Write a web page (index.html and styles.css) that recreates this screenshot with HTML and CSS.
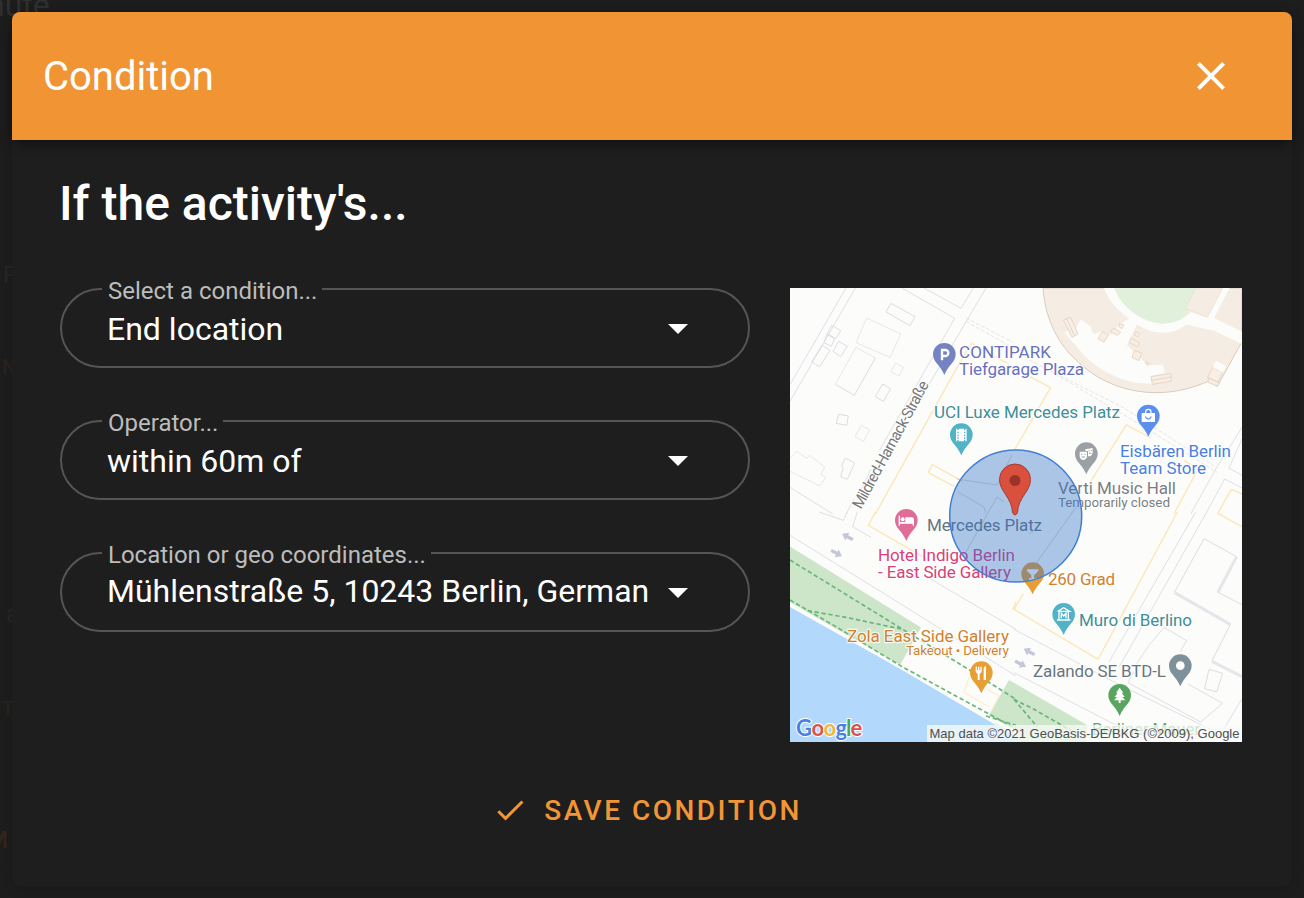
FILE: index.html
```html
<!DOCTYPE html>
<html lang="en">
<head>
<meta charset="utf-8">
<title>Condition</title>
<link rel="stylesheet" href="styles.css">
</head>
<body>
<div class="backdrop" aria-hidden="true">
  <span class="ghost ghost-title">nute</span>
  <span class="ghost ghost-p">P</span>
  <span class="ghost ghost-n">N</span>
  <span class="ghost ghost-a">a</span>
  <span class="ghost ghost-t">T</span>
  <span class="ghost ghost-m">M</span>
</div>
<main class="dialog">
  <header class="toolbar">
    <h1 class="toolbar-title">Condition</h1>
    <button class="close" aria-label="Close">
      <svg width="48" height="48" viewBox="0 0 24 24"><path fill="#fff" d="M19,6.41L17.59,5L12,10.59L6.41,5L5,6.41L10.59,12L5,17.59L6.41,19L12,13.41L17.59,19L19,17.59L13.41,12L19,6.41Z"/></svg>
    </button>
  </header>
  <section class="content">
    <h2 class="heading">If the activity's...</h2>
    <div class="columns">
      <div class="fields">
        <div class="field">
          <span class="label">Select a condition...</span>
          <span class="value">End location</span>
          <svg class="caret" width="48" height="48" viewBox="0 0 24 24"><path fill="#fff" d="M7,10L12,15L17,10H7Z"/></svg>
        </div>
        <div class="field">
          <span class="label">Operator...</span>
          <span class="value">within 60m of</span>
          <svg class="caret" width="48" height="48" viewBox="0 0 24 24"><path fill="#fff" d="M7,10L12,15L17,10H7Z"/></svg>
        </div>
        <div class="field">
          <span class="label">Location or geo coordinates...</span>
          <span class="value value-input">Mühlenstraße 5, 10243 Berlin, Germany</span>
          <svg class="caret" width="48" height="48" viewBox="0 0 24 24"><path fill="#fff" d="M7,10L12,15L17,10H7Z"/></svg>
        </div>
      </div>
      <svg class="map" width="452" height="454" viewBox="790 288 452 454">
        <defs>
          <path id="pin" d="M-34 0A34 34 0 1 1 34 0C34 24 12 32 0 62C-12 32 -34 24 -34 0Z"/>
          <path id="arrow" d="M-18 0L0 -13V-5H19V5H0V13Z"/>
        </defs>
        <rect x="790" y="288" width="452" height="454" fill="#fcfcfa"/>

        <!-- river bank, park and water -->
        <path class="park" d="M790 546.500L921 627.500L899 667L790 602Z"/>
        <path class="park" d="M1009 680L1087 725L1087 742H1018L988 717Z"/>
        <path class="water" d="M790 607L898 667.500L994 724L1024 742H790Z"/>

        <!-- north-west buildings and streets -->
        <g transform="translate(786 284) scale(.33333)">
          <g class="street">
            <path d="M180 12L12 302M208 12L12 352M348 12L506 103L280 500M414 12L525 73L562 12M600 12L430 300M12 610L140 690M180 690L205 645M255 555L215 640"/>
            <path class="dash" d="M540 112L668 184M540 102L680 174"/>
          </g>
          <g class="building">
            <path d="M315 58L387 98L372 125L300 84ZM137 124L164 140L150 164L124 149ZM122 151L146 164L136 187L114 176ZM158 172L184 187L164 218L141 202ZM108 184L132 199L101 248L77 234ZM290 300L314 314L292 352L268 338ZM158 391L187 396L182 424L151 418ZM178 522L206 537L184 586L164 578L172 551L166 547Z"/>
            <path d="M268 222L205 334L148 301"/>
          </g>
          <path class="building faint" d="M242 102L345 150L312 220L210 176ZM210 190L148 301M210 190L268 222M328 237L352 249L340 276L315 264ZM226 424L251 437L233 472L207 458ZM12 524L32 502L63 523L71 514L116 549L105 571L119 581L101 606L12 562"/>
          <path class="plot" d="M268 690L520 238L556 178L575 188M610 210L664 237M427 566L439 542L530 592M427 566L505 607"/>
        </g>

        <!-- arena and streets, north-east -->
        <g transform="translate(1014 284) scale(.33333)">
          <path fill="#f5ede4" stroke="#d8cbbd" stroke-width="3" d="M87 12C93 95 125 170 180 222C250 295 340 325 425 326C490 326 540 310 582 292L610 307L684 173V12Z"/>
          <path fill="#fcfcfa" d="M270 12H304C320 55 372 105 440 116C488 119 520 98 530 84L575 98L626 12H647L600 102L684 143V180L600 140L520 122C490 145 450 151 410 142L368 122L340 183L405 245L448 240L452 268L413 275L416 300L360 296C270 272 225 235 190 190L150 145L188 130L200 106L230 128L238 150L265 142L292 152L312 126L345 103C304 75 282 45 270 12Z"/>
          <path fill="#f5ede4" d="M340 183L370 128L412 145C445 153 490 144 516 122L597 152L560 238L460 265L445 242L400 242Z"/>
          <path fill="#e1f0db" d="M301 12C318 65 382 116 445 119C500 116 521 98 522 72L545 12Z"/>
          <path fill="#f5ede4" stroke="#eaddcf" stroke-width="2" d="M545 12H626L580 100L515 73Z"/>
          <g fill="#f7efe5" stroke="#ead5c3" stroke-width="3">
            <path d="M148 108L170 100L192 150L174 160ZM158 104L182 156M266 142L284 152L270 174L252 164ZM298 132L320 144L310 154L289 143ZM316 118L330 124L324 134L314 128ZM364 142L378 150L372 158L361 153ZM352 162L378 178L370 188L346 176ZM362 199L384 208L374 230L354 220ZM394 234L406 238L400 244ZM411 278L470 268L472 292L415 301ZM413 289L471 279"/>
            <path d="M596 250L626 266L612 294L580 280ZM582 282L616 296L610 306L584 296Z"/>
          </g>
          <path fill="#fcfcfa" d="M606 230L636 246L626 266L596 250Z"/>
          <g class="street">
            <path d="M684 430L628 520L608 550L530 690M684 465L645 552L684 574M684 612L632 585L575 690"/>
            <path class="dash" d="M46 228L330 372L610 552M110 262L350 405L610 565"/>
          </g>
          <path class="plot" d="M48 278L110 311L0 500M230 592L337 423L412 462M510 530L552 555L480 690M684 630L652 616L610 690"/>
        </g>

        <!-- riverside street and promenade, south-west -->
        <g transform="translate(786 512) scale(.33333)">
          <path class="street" d="M100 0L172 25L184 0M214 0L200 44L255 76M12 70L330 267L690 492M415 190L690 352"/>
          <path class="plot" d="M268 0L247 40L420 140M690 270L681 290L690 294"/>
          <path class="plot faint" d="M550 495L534 540L610 585M600 530L640 552L615 600"/>
          <path fill="none" stroke="#fcfcfa" stroke-width="10" d="M12 278L250 412L690 662"/>
          <path class="trail" d="M12 144L350 352L520 455L690 562M12 264L160 350L350 465L690 650M65 296L180 316L350 352M600 612L690 640"/>
          <use href="#arrow" fill="#c4c6dc" transform="translate(184 74) rotate(28)"/>
          <use href="#arrow" fill="#c4c6dc" transform="translate(152 124) rotate(208)"/>
        </g>

        <!-- south-east blocks -->
        <g transform="translate(1014 512) scale(.33333)">
          <path class="street" d="M0 352L312 516L590 652M0 482L405 690M545 0L285 450M578 0L315 466M342 512L560 630L626 574L522 516M342 512L358 480M450 346L518 386L498 420M450 346L405 400L365 460M684 560L630 650"/>
          <path class="building" d="M570 80L668 134L610 240L684 278M570 80L482 240L650 336L594 446L684 494M585 472L626 484L608 540L572 530Z"/>
          <path fill="none" stroke="#e5e6ea" stroke-width="9" d="M482 242L650 338M594 448L684 494M668 134L612 240"/>
          <path class="plot" d="M490 0L252 442L0 292L28 245M612 4L684 44"/>
          <path class="trail" d="M0 562L60 592L170 655M0 562L70 645"/>
          <use href="#arrow" fill="#c4c6dc" transform="translate(45 419) rotate(28)"/>
          <use href="#arrow" fill="#c4c6dc" transform="translate(20 456) rotate(208)"/>
        </g>

        <!-- place labels -->
        <g class="places">
          <text x="959" y="357.500" textLength="92" fill="#6770bd">CONTIPARK</text>
          <text x="959" y="374.500" textLength="125" fill="#6770bd">Tiefgarage Plaza</text>
          <text x="934" y="417.500" textLength="186" fill="#3d8f98">UCI Luxe Mercedes Platz</text>
          <text x="1120" y="457" textLength="111" fill="#4a7fe2">Eisbären Berlin</text>
          <text x="1120" y="473.500" textLength="86" fill="#4a7fe2">Team Store</text>
          <text x="1058" y="494" textLength="118" fill="#7b7f83">Verti Music Hall</text>
          <text class="sub" x="1058" y="507" textLength="112" fill="#7b7f83">Temporarily closed</text>
          <text x="927" y="531" textLength="115" fill="#667580">Mercedes Platz</text>
          <text x="878" y="561" textLength="137" fill="#d84179">Hotel Indigo Berlin</text>
          <text x="878" y="577.500" textLength="133" fill="#d84179">- East Side Gallery</text>
          <text x="1048" y="585" textLength="67" fill="#d1812f">260 Grad</text>
          <text x="1079" y="625.500" textLength="113" fill="#3d8f98">Muro di Berlino</text>
          <text x="847" y="642" textLength="162" fill="#d1812f">Zola East Side Gallery</text>
          <text class="sub" x="906" y="655" textLength="103" fill="#d1812f">Takeout • Delivery</text>
          <text x="1033" y="677" textLength="133" fill="#687581">Zalando SE BTD-L</text>
          <text x="1092" y="735" textLength="108" fill="#5fa866">Berliner Mauer</text>
          <text class="road" x="0" y="0" textLength="143" fill="#77797c" transform="translate(861 510) rotate(-61.500)">Mildred-Harnack-Straße</text>
        </g>

        <!-- place pins, drawn at three units per pixel -->
        <g transform="translate(786 284) scale(.33333)">
          <g transform="translate(475 211)">
            <use href="#pin" fill="#7683c3"/>
            <path fill="none" stroke="#fff" stroke-width="7" d="M-7 18V-13H3A8.500 8.500 0 0 1 3 5H-7"/>
          </g>
          <g transform="translate(526 452)">
            <use href="#pin" fill="#52b2c6"/>
            <path fill="#fff" fill-rule="evenodd" d="M-16 -18H-12V-14H-8V-18H8V-14H12V-18H16V20H12V15H8V20H-8V15H-12V20H-16ZM-12 -9V-4H-8V-9ZM-12 0V5H-8V0ZM8 -9V-4H12V-9ZM8 0V5H12V0ZM-12 8V12H-8V8ZM8 8V12H12V8Z"/>
          </g>
          <g transform="translate(361 709)">
            <use href="#pin" fill="#df6d98"/>
            <path fill="#fff" d="M-23 -14H-19V5H-3V-9H15Q23 -9 23 -2V16H19V10H-19V16H-23Z"/>
            <circle cx="-11" cy="-3" r="6" fill="#fff"/>
          </g>
          <g transform="translate(586 1166)">
            <use href="#pin" fill="#e79e35"/>
            <path fill="#fff" d="M-17 -18H-13V-7H-10V-18H-6V-7H-3V-18H1V-4Q0 2 -5 3V22H-11V3Q-17 2 -17 -4ZM7 22V-13Q8 -19 14 -20V22Z"/>
          </g>
          <g transform="translate(1087 396)">
            <use href="#pin" fill="#5b8fee"/>
            <path fill="none" stroke="#fff" stroke-width="3.500" d="M-8 -6V-12A8 8 0 0 1 8 -12V-6"/>
            <path fill="#fff" d="M-20 -9H20V18H-20Z"/>
            <path fill="none" stroke="#5b8fee" stroke-width="3.500" d="M-9 2Q0 17 9 2"/>
          </g>
          <g transform="translate(901 509)">
            <use href="#pin" fill="#9aa0a3"/>
            <path fill="#fff" d="M-20 -6H2V7Q1 18 -9 19Q-20 17 -20 7ZM-3 -13L19 -17V-3Q18 8 5 8V-8H-3Z"/>
            <path fill="none" stroke="#9aa0a3" stroke-width="3" d="M-16 2H-12M-6 2H-2M-14 10H-4M7 -8H10M14 -9H17M8 1Q12 -4 16 0"/>
          </g>
          <g transform="translate(740 869)">
            <use href="#pin" fill="#e79e35"/>
            <path fill="#fff" d="M-17 -13H17V-8L4 5V14H11V19H-11V14H-4V5L-17 -8Z"/>
          </g>
          <g transform="translate(833 991)">
            <use href="#pin" fill="#52b2c6"/>
            <path fill="none" stroke="#fff" stroke-width="4" d="M-18 -9L0 -20L18 -9H-18M-14 -8V15M14 -8V15M-20 17H20M-7 12V-3L0 5L7 -3V12"/>
          </g>
          <g transform="translate(1183 1145)">
            <use href="#pin" fill="#7e909a"/>
            <circle r="13" fill="#fff"/>
          </g>
          <g transform="translate(1001 1234)">
            <use href="#pin" fill="#57a55e"/>
            <path fill="#fff" d="M0 -23L11 -8H6L15 5H8L17 15H3V23H-3V15H-17L-8 5H-15L-6 -8H-11Z"/>
          </g>
        </g>

        <!-- search radius -->
        <circle cx="1015.700" cy="516" r="66" fill="#2c6fca" fill-opacity=".39" stroke="#437fcf" stroke-width="1.500"/>
        <path fill="none" stroke="#7d94ab" stroke-opacity=".45" d="M957 479L997 485L1012 455M958 492L984 507L986 513M966 552L997 497L1004 502M1032 569L1077 506M1035 530L1029 534"/>
        <g transform="translate(1015 480.500)">
          <path fill="#d9513c" stroke="#a43b32" stroke-width="1" d="M-15.500 -1A15.500 15.500 0 1 1 15.500 -1C15.500 11 3 17 2.500 32Q0 37 -2.500 32C-3 17 -15.500 11 -15.500 -1Z"/>
          <circle r="5.500" fill="#9c3328"/>
        </g>

        <!-- attribution -->
        <g class="google">
          <text y="735.500"><tspan x="796" fill="#4b7ee6">G</tspan><tspan x="811.500" fill="#d9554c">o</tspan><tspan x="823.500" fill="#ecb83f">o</tspan><tspan x="835.500" fill="#4b7ee6">g</tspan><tspan x="846" fill="#4ca45f">l</tspan><tspan x="850.500" fill="#d9554c">e</tspan></text>
        </g>
        <rect x="927" y="725" width="315" height="17" fill="#f8f9f8" fill-opacity=".75"/>
        <text class="credit" x="929.500" y="738" textLength="310">Map data ©2021 GeoBasis-DE/BKG (©2009), Google</text>
      </svg>
    </div>
  </section>
  <footer class="actions">
    <button class="save">
      <svg width="36" height="36" viewBox="0 0 24 24"><path fill="#f29535" d="M21,7L9,19L3.500,13.500L4.910,12.090L9,16.170L19.590,5.590L21,7Z"/></svg>
      <span>Save condition</span>
    </button>
  </footer>
</main>
</body>
</html>
```
FILE: styles.css
```css
* {
  box-sizing: border-box;
}

body {
  margin: 0;
  height: 898px;
  padding: 12px;
  overflow: hidden;
  background: #1e1e1e;
  color: #fff;
  font-family: Roboto, "Liberation Sans", sans-serif;
}

button {
  padding: 0;
  border: 0;
  background: none;
  font: inherit;
}

/* Page dimmed behind the dialog */
.backdrop {
  position: absolute;
  inset: 0;
  overflow: hidden;
}

.ghost {
  position: absolute;
  color: #282828;
  font-size: 24px;
  line-height: 28px;
}

.ghost-title { left: -13px; top: -13px; font-size: 32px; line-height: 36px; color: #303030; }
.ghost-p { left: 3px; top: 261px; }
.ghost-n { left: 2px; top: 353px; font-size: 20px; font-weight: 700; color: #2a241e; }
.ghost-a { left: 6px; top: 600px; }
.ghost-t { left: 2px; top: 695px; font-size: 20px; font-weight: 700; color: #2a241e; }
.ghost-m { left: -13px; top: 826px; font-weight: 500; color: #35281b; }

.dialog {
  position: relative;
  height: 874px;
  display: flex;
  flex-direction: column;
  border-radius: 8px;
  background: #1e1e1e;
  box-shadow: 0 6px 24px rgba(0, 0, 0, .2);
}

.toolbar {
  position: relative;
  height: 128px;
  flex: none;
  display: flex;
  align-items: center;
  justify-content: space-between;
  padding: 0 57px 0 31px;
  border-radius: 8px 8px 0 0;
  background: #f19534;
  box-shadow: 0 5px 14px -3px rgba(0, 0, 0, .6);
}

.toolbar-title {
  margin: 0;
  padding-top: 2px;
  font-size: 40px;
  font-weight: 400;
  line-height: 60px;
}

.close,
.close svg {
  display: block;
}

.content {
  padding: 32px 50px 0 48px;
}

.heading {
  margin: 0 0 0 -1px;
  font-size: 48px;
  font-weight: 500;
  line-height: 64px;
  white-space: nowrap;
}

.columns {
  display: flex;
  justify-content: space-between;
  align-items: flex-start;
  padding-top: 52px;
}

.fields {
  width: 690px;
  display: flex;
  flex-direction: column;
  gap: 52px;
}

.field {
  position: relative;
  height: 80px;
  display: flex;
  align-items: center;
  justify-content: space-between;
  padding: 0 46px 0 45px;
  border: 2px solid #555;
  border-radius: 40px;
}

.label {
  position: absolute;
  left: 40px;
  top: -13px;
  padding: 0 5px 0 6px;
  background: #1e1e1e;
  color: #bcbcbc;
  font-size: 24px;
  line-height: 28px;
  white-space: nowrap;
}

.value {
  width: 541px;
  overflow: hidden;
  font-size: 32px;
  line-height: 40px;
  padding-top: 2px;
  white-space: nowrap;
}

.value-input {
  padding: 0 0 2px;
}

.caret {
  flex: none;
}

.map {
  display: block;
  flex: none;
}

.park { fill: #cde6ca; }
.water { fill: #b2d9fb; }

.street,
.building,
.plot,
.trail {
  fill: none;
  stroke-width: 3;
}

.street { stroke: #dedfe7; }
.building { stroke: #dcdce3; }
.plot { stroke: #fde6b5; stroke-width: 4; }
.faint { opacity: .65; }
.dash { stroke-dasharray: 12 5; stroke: #e5e5e7; }
.trail { stroke: #6ab579; stroke-width: 5; stroke-dasharray: 13 8; }

.places {
  font-size: 17px;
  paint-order: stroke;
  stroke: #fff;
  stroke-opacity: .8;
  stroke-width: 2.500px;
  stroke-linejoin: round;
}

.places .sub { font-size: 13.500px; }
.places .road { font-size: 15.500px; }

.google {
  font-family: Lato, sans-serif;
  font-size: 22px;
  font-weight: 700;
  paint-order: stroke;
  stroke: #fff;
  stroke-width: 2px;
}

.credit {
  fill: #4c5050;
  font-family: "Liberation Sans", Arial, sans-serif;
  font-size: 13px;
}

.actions {
  display: flex;
  justify-content: center;
  padding: 42px 10px 0 0;
}

.save {
  display: flex;
  align-items: center;
  gap: 16px;
  height: 52px;
  color: #f29535;
  font-size: 28px;
  font-weight: 500;
  letter-spacing: 2.500px;
  text-transform: uppercase;
}
```
